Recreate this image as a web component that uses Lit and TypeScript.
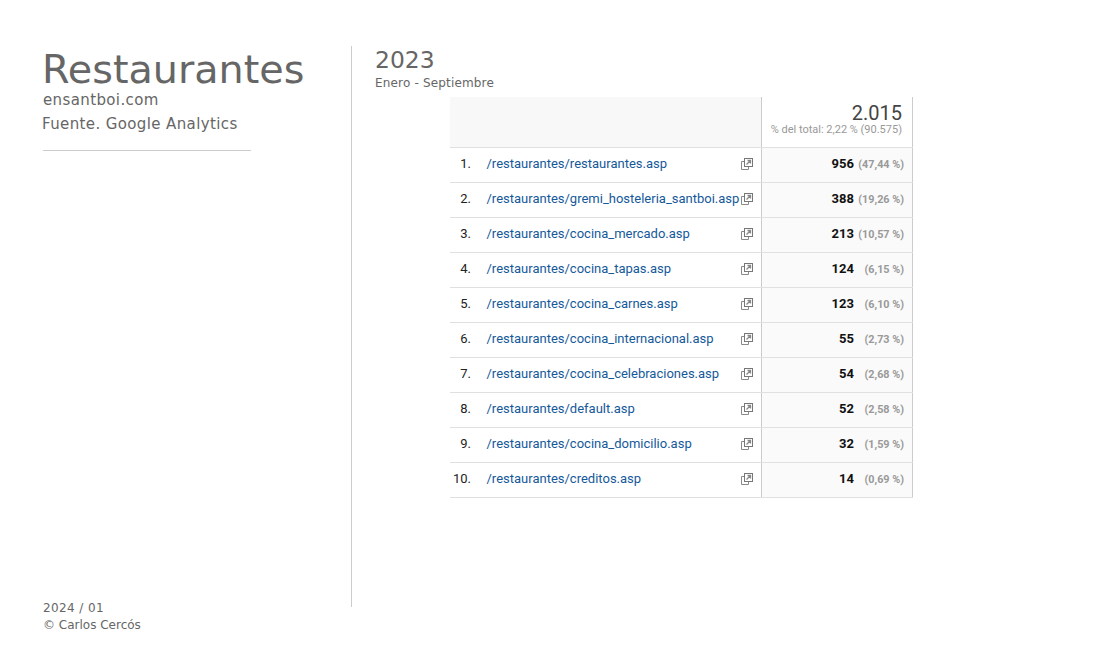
import { LitElement, html, css, svg } from "lit";
import { customElement } from "lit/decorators.js";

const rows: [string, string, string][] = [
  ["/restaurantes/restaurantes.asp", "956", "(47,44 %)"],
  ["/restaurantes/gremi_hosteleria_santboi.asp", "388", "(19,26 %)"],
  ["/restaurantes/cocina_mercado.asp", "213", "(10,57 %)"],
  ["/restaurantes/cocina_tapas.asp", "124", "(6,15 %)"],
  ["/restaurantes/cocina_carnes.asp", "123", "(6,10 %)"],
  ["/restaurantes/cocina_internacional.asp", "55", "(2,73 %)"],
  ["/restaurantes/cocina_celebraciones.asp", "54", "(2,68 %)"],
  ["/restaurantes/default.asp", "52", "(2,58 %)"],
  ["/restaurantes/cocina_domicilio.asp", "32", "(1,59 %)"],
  ["/restaurantes/creditos.asp", "14", "(0,69 %)"],
];

const icon = svg`<svg class="ic" width="12" height="12" viewBox="0 0 12 12" fill="none">
  <path d="M3.5 3.5H.5v8h7V8.500" stroke="#8a8a8a" stroke-width="1"/>
  <rect x="3.500" y=".5" width="8" height="8" fill="#fff" stroke="#777" stroke-width="1"/>
  <path d="M5.500 6.500 9 3M6.500 2.500H9.500V5.500" stroke="#888" stroke-width="1.300"/>
</svg>`;

@customElement("app-root")
export class AppRoot extends LitElement {
  static styles = css`
    :host { display: block; width: 1100px; height: 670px; background: #fff; overflow: hidden; }
    .page { display: flex; height: 670px; box-sizing: border-box; padding-top: 46px; }
    .side {
      width: 310px; height: 561px; margin-left: 42px; box-sizing: border-box;
      border-right: 1px solid #ccc; display: flex; flex-direction: column;
      font-family: "DejaVu Sans", sans-serif; color: #666;
    }
    .title { font-size: 39.700px; line-height: 46px; }
    .site { font-size: 15px; line-height: 18px; margin: -1px 0 0 1px; letter-spacing: 0.380px; }
    .src { font-size: 15px; line-height: 18px; margin-top: 6px; letter-spacing: 0.380px; }
    .rule { width: 208px; height: 1px; background: #ccc; margin: 17px 0 0 1px; }
    .foot { margin-top: auto; margin-left: 1px; font-size: 12px; line-height: 17px; position: relative; top: 27px; }
    .date { letter-spacing: 0.400px; }
    .main { margin-left: 23px; display: flex; flex-direction: column; }
    .year { font-family: "DejaVu Sans", sans-serif; color: #666; font-size: 23.400px; line-height: 28px; }
    .range { font-family: "DejaVu Sans", sans-serif; color: #666; font-size: 12px; line-height: 16px; margin-top: 1px; letter-spacing: 0.170px; }
    .table { width: 463px; margin: 6px 0 0 75px; font-family: Roboto, sans-serif; }
    .row { display: grid; grid-template-columns: 311px 1fr; height: 35px; box-sizing: border-box; border-bottom: 1px solid #e0e0e0; }
    .head { height: 51px; }
    .head .l { background: #f8f8f8; }
    .head .r { background: #fff; flex-direction: column; align-items: flex-end; justify-content: flex-start; padding: 5px 10px 0 0; }
    .total { font-size: 20px; line-height: 22px; font-weight: 400; color: #444; }
    .sub { font-size: 11px; line-height: 14px; color: #999; margin-top: -1px; }
    .l { display: flex; align-items: center; font-size: 13px; min-width: 0; position: relative; padding-bottom: 3px; box-sizing: border-box; }
    .n { width: 21px; text-align: right; color: #222; flex: none; }
    .p { margin-left: 15.500px; color: #15599a; white-space: nowrap; }
    .ic { position: absolute; left: 291px; top: 10px; }
    .r { background: #fafafa; border-left: 1px solid #ccc; border-right: 1px solid #ccc; display: flex; align-items: center; justify-content: flex-end; padding: 0 8px 3px 0; box-sizing: border-box; }
    .v { font-size: 13px; font-weight: 700; color: #111; }
    .pc { font-size: 10.800px; font-weight: 700; color: #999; width: 50px; text-align: right; flex: none; margin-top: 2px; }
  `;

  render() {
    return html`<div class="page">
      <div class="side">
        <div class="title">Restaurantes</div>
        <div class="site">ensantboi.com</div>
        <div class="src">Fuente. Google Analytics</div>
        <div class="rule"></div>
        <div class="foot"><span class="date">2024 / 01</span><br />© Carlos Cercós</div>
      </div>
      <div class="main">
        <div class="year">2023</div>
        <div class="range">Enero - Septiembre</div>
        <div class="table">
          <div class="row head">
            <div class="l"></div>
            <div class="r">
              <div class="total">2.015</div>
              <div class="sub">% del total: 2,22 % (90.575)</div>
            </div>
          </div>
          ${rows.map(
            ([p, v, c], i) => html`<div class="row">
              <div class="l"><span class="n">${i + 1}.</span><span class="p">${p}</span>${icon}</div>
              <div class="r"><span class="v">${v}</span><span class="pc">${c}</span></div>
            </div>`
          )}
        </div>
      </div>
    </div>`;
  }
}
